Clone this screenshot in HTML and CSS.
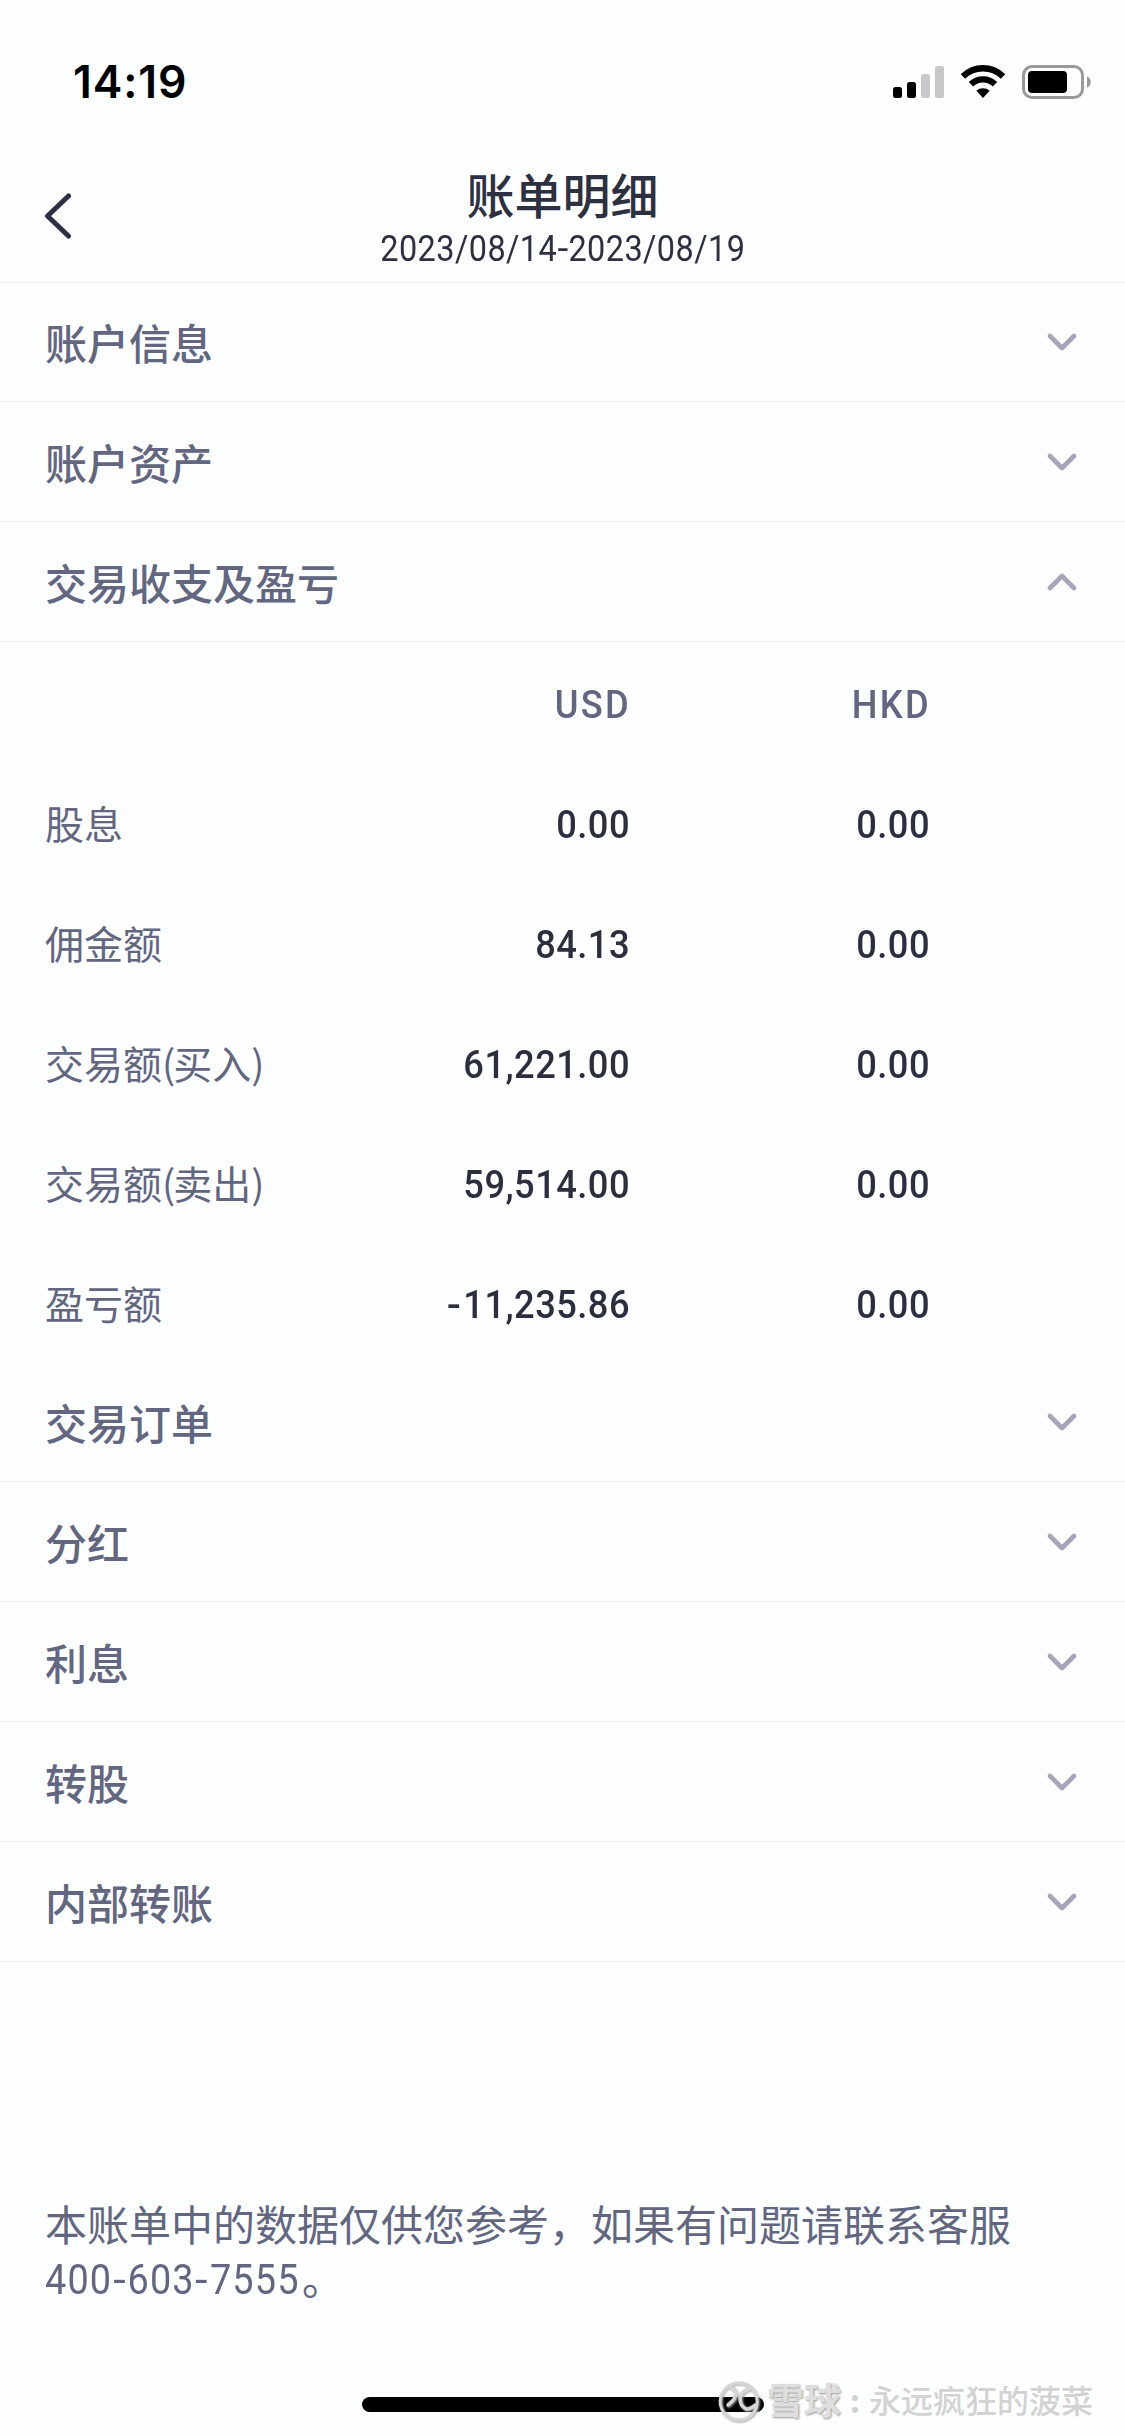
FILE: index.html
```html
<!DOCTYPE html>
<html lang="zh-CN">
<head>
<meta charset="utf-8">
<title>账单明细</title>
<link rel="stylesheet" href="styles.css">
</head>
<body>
<svg class="defs" width="0" height="0" aria-hidden="true">
  <symbol id="chevron" viewBox="0 0 30 18"><path d="M3 3l12 12L27 3" fill="none" stroke="currentColor" stroke-width="4.6" stroke-linecap="round" stroke-linejoin="round"/></symbol>
</svg>
<div class="screen">
  <div class="status">
    <span class="time">14:19</span>
    <svg class="status-icons" viewBox="0 0 200 36" width="200" height="36">
      <rect x="1" y="23" width="9" height="11" rx="2.5"/>
      <rect x="15" y="18" width="9" height="16" rx="2.5"/>
      <rect x="29" y="10" width="9" height="24" rx="2.5" fill="#c8c8ca"/>
      <rect x="43" y="2" width="9" height="32" rx="2.5" fill="#c8c8ca"/>
      <g fill="none" stroke="#000" stroke-width="6.4">
        <path d="M71 12.5A28.5 28.5 0 0 1 111 12.5"/>
        <path d="M79 20.2A17.4 17.4 0 0 1 103 20.2"/>
      </g>
      <path d="M91 34l-6.6-7.2a10 10 0 0 1 13.2 0z"/>
      <rect x="131.5" y="2.5" width="59" height="31" rx="8.5" fill="none" stroke="#999" stroke-width="3"/>
      <rect x="136" y="7" width="39" height="22" rx="4"/>
      <path d="M195 12.500c5 1.500 5 9.500 0 11z" fill="#999"/>
    </svg>
  </div>
  <header class="nav">
    <svg class="back" viewBox="0 0 28 46" width="28" height="46"><path d="M24.500 3L3.500 23l21 20" fill="none" stroke="#2d3040" stroke-width="5" stroke-linecap="round" stroke-linejoin="round"/></svg>
    <div class="heading">
      <h1>账单明细</h1>
      <div class="period"><span class="din">2023/08/14<i>-</i>2023/08/19</span></div>
    </div>
  </header>
  <main>
    <section class="row first"><span>账户信息</span><svg class="arrow"><use href="#chevron"/></svg></section>
    <section class="row"><span>账户资产</span><svg class="arrow"><use href="#chevron"/></svg></section>
    <section class="row"><span>交易收支及盈亏</span><svg class="arrow up"><use href="#chevron"/></svg></section>
    <div class="table">
      <div class="line head"><span></span><b>USD</b><b>HKD</b></div>
      <div class="line"><span>股息</span><b>0.00</b><b>0.00</b></div>
      <div class="line"><span>佣金额</span><b>84.13</b><b>0.00</b></div>
      <div class="line"><span>交易额<i>(</i>买入<i>)</i></span><b>61,221.00</b><b>0.00</b></div>
      <div class="line"><span>交易额<i>(</i>卖出<i>)</i></span><b>59,514.00</b><b>0.00</b></div>
      <div class="line"><span>盈亏额</span><b><i>-</i>11,235.86</b><b>0.00</b></div>
    </div>
    <section class="row"><span>交易订单</span><svg class="arrow"><use href="#chevron"/></svg></section>
    <section class="row"><span>分红</span><svg class="arrow"><use href="#chevron"/></svg></section>
    <section class="row"><span>利息</span><svg class="arrow"><use href="#chevron"/></svg></section>
    <section class="row"><span>转股</span><svg class="arrow"><use href="#chevron"/></svg></section>
    <section class="row"><span>内部转账</span><svg class="arrow"><use href="#chevron"/></svg></section>
  </main>
  <footer class="note">
    <div>本账单中的数据仅供您参考，如果有问题请联系客服</div>
    <div class="phone"><span class="din">400<i>-</i>603<i>-</i>7555</span><span>。</span></div>
  </footer>
  <div class="home"></div>
  <div class="watermark">
    <svg viewBox="0 0 44 44" width="44" height="44" fill="none" stroke="#d6d6d6" stroke-linecap="round">
      <circle cx="21.700" cy="22.500" r="18.500" stroke-width="3"/>
      <path d="M13 8c5 2 7 6 5 10-1 3-4 5-7 8M33 10c-6 1-10 5-10 9 0 5 2 9 6 11 3 0 6-1 9-4" stroke-width="3.500"/>
    </svg>
    <span class="brand">雪球</span><span class="colon">:</span><span class="author">永远疯狂的菠菜</span>
  </div>
</div>
</body>
</html>
```
FILE: styles.css
```css
* { box-sizing: border-box; }
body { margin: 0; background: #fdfefe; }
i { font-style: normal; }
.defs { position: absolute; }
.screen {
  position: relative;
  display: flex;
  flex-direction: column;
  width: 1125px;
  height: 2436px;
  background: #fdfefe;
  color: #626680;
  font-family: "Noto Sans CJK SC", sans-serif;
  overflow: hidden;
}
.status {
  display: flex;
  justify-content: space-between;
  align-items: center;
  height: 132px;
  padding: 32px 33px 0 73px;
}
.time { font: 600 44.500px/44px Inter, sans-serif; letter-spacing: .9px; color: #000; }
.status-icons { display: block; }
.nav {
  display: grid;
  grid-template-columns: 45px 1fr 45px;
  height: 151px;
  border-bottom: 1px solid #e7ecee;
  color: #2d3040;
}
.back { margin: 61px 0 0 44px; }
.heading { text-align: center; }
h1 { margin: 33px 0 0; font-size: 48px; line-height: 56px; font-weight: 500; }
.period { font: 400 36px/40px Roboto, sans-serif; margin-top: 8px; }
.din { display: inline-block; transform: scaleX(.9); letter-spacing: .5px; }
.din i { display: inline-block; transform: scaleX(1.2); margin: 0 1px; }
.row {
  display: flex;
  align-items: center;
  justify-content: space-between;
  height: 120px;
  padding: 0 48px 0 45px;
  border-bottom: 1px solid #e7ecee;
  font-size: 42px;
  line-height: 60px;
  font-weight: 500;
}
.row.first { height: 119px; }
.arrow { width: 30px; height: 18px; color: #a5a7b8; }
.arrow.up { transform: rotate(180deg); }
.line {
  display: grid;
  grid-template-columns: 285px 300px 300px;
  align-items: center;
  height: 120px;
  padding: 0 0 0 45px;
  font-size: 39px;
  line-height: 56px;
}
.line span i { letter-spacing: -2px; }
.line b {
  padding-top: 5px;
  font-family: Roboto, sans-serif;
  font-weight: 500;
  letter-spacing: .5px;
  text-align: right;
  color: #2b2f3d;
  transform: scaleX(.93);
  transform-origin: right;
}
.line b i { display: inline-block; margin-right: 3px; transform: scaleX(1.15); }
.line.head b { color: #626680; letter-spacing: 2.500px; margin-right: -1px; }
.note { margin-top: 234px; padding-left: 45px; font-size: 42px; line-height: 54px; }
.phone { display: flex; }
.phone .din {
  margin: 3px -26px 0 0;
  font-family: Roboto, sans-serif;
  font-weight: 400;
  letter-spacing: 1.300px;
  transform-origin: left;
}
.phone .din i { margin: 0 2px; }
.home {
  position: absolute;
  left: 362px;
  top: 2397px;
  width: 402px;
  height: 15px;
  border-radius: 8px;
  background: #000;
}
.watermark {
  position: absolute;
  left: 717px;
  top: 2379px;
  display: flex;
  align-items: center;
  height: 44px;
  color: #d2d2d2;
  font-size: 32px;
  line-height: 44px;
}
.watermark svg { filter: drop-shadow(1px 1px 1px #aaa); }
.brand, .colon, .author { position: relative; top: -2px; }
.brand { margin-left: 6px; font-size: 37px; font-weight: 700; color: #dedede; text-shadow: 1px 1px 2px #999; }
.colon { width: 28px; text-align: center; font-weight: 700; }
.author { font-weight: 500; }
```
